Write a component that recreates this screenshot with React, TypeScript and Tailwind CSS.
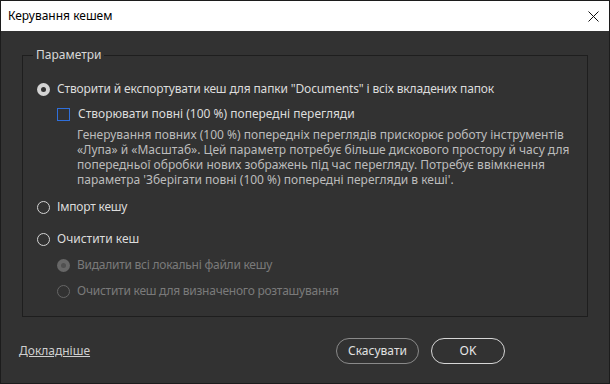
import React, { useState } from 'react';

type RadioProps = {
  checked: boolean;
  disabled?: boolean;
  onClick?: () => void;
};

const Radio: React.FC<RadioProps> = ({ checked, disabled, onClick }) => {
  if (checked) {
    return (
      <span
        onClick={onClick}
        className={`flex h-[13px] w-[13px] shrink-0 items-center justify-center rounded-full ${disabled ? 'bg-[#676767]' : 'bg-[#d4d4d4]'}`}
      >
        <span className={`h-[5px] w-[5px] rounded-full ${disabled ? 'bg-[#505050]' : 'bg-[#323232]'}`} />
      </span>
    );
  }
  return (
    <span
      onClick={onClick}
      className={`h-[13px] w-[13px] shrink-0 rounded-full border-[1.5px] ${disabled ? 'border-[#666666]' : 'border-[#d4d4d4]'}`}
    />
  );
};

export default function App() {
  const [mode, setMode] = useState<'export' | 'import' | 'clear'>('export');
  const [full, setFull] = useState(false);
  const [clearMode, setClearMode] = useState<'all' | 'location'>('all');
  const subDisabled = mode !== 'clear';

  return (
    <div
      className="flex h-[384px] w-[610px] flex-col border border-[#1c1c1c] text-[12px] leading-[16px]"
      style={{ fontFamily: '"Noto Sans", "Liberation Sans", sans-serif' }}
    >
      {/* title bar */}
      <div className="flex h-[30px] shrink-0 items-center justify-between bg-white pl-[7px] pr-[10px]">
        <span className="text-[12px] text-black">Керування кешем</span>
        <svg width="11" height="11" viewBox="0 0 11 11">
          <path d="M0.5 0.5 L10.5 10.5 M10.5 0.5 L0.5 10.5" stroke="#111" strokeWidth="1" />
        </svg>
      </div>

      <div className="flex flex-1 flex-col bg-[#323232]">
        <fieldset className="mx-[21px] mt-[16px] h-[270px] border border-[#1e1e1e] pl-[14px]">
          <legend className="ml-[-4px] px-[3px] text-[#d8d8d8]">Параметри</legend>

          <div
            className="mt-[18px] flex h-[16px] items-center gap-[7px] tracking-[-0.15px] text-[#dcdcdc]"
            onClick={() => setMode('export')}
          >
            <Radio checked={mode === 'export'} />
            <span>Створити й експортувати кеш для папки "Documents" і всіх вкладених папок</span>
          </div>

          <div className="mt-[9px] flex h-[16px] items-center gap-[8px] pl-[20px] text-[#dcdcdc]" onClick={() => setFull(!full)}>
            <span className={`h-[13px] w-[13px] shrink-0 border border-[#2f6fdb] ${full ? 'bg-[#2f6fdb]' : ''}`} />
            <span>Створювати повні (100 %) попередні перегляди</span>
          </div>

          <div className="mt-[5px] whitespace-nowrap pl-[40px] leading-[15px] text-[#bcbcbc]">
            <div>Генерування повних (100 %) попередніх переглядів прискорює роботу інструментів</div>
            <div>«Лупа» й «Масштаб». Цей параметр потребує більше дискового простору й часу для</div>
            <div>попередньої обробки нових зображень під час перегляду. Потребує ввімкнення</div>
            <div>параметра 'Зберігати повні (100 %) попередні перегляди в кеші'.</div>
          </div>

          <div
            className="mt-[12px] flex h-[16px] items-center gap-[7px] tracking-[-0.2px] text-[#dcdcdc]"
            onClick={() => setMode('import')}
          >
            <Radio checked={mode === 'import'} />
            <span>Імпорт кешу</span>
          </div>

          <div
            className="mt-[16px] flex h-[16px] items-center gap-[7px] text-[#dcdcdc]"
            onClick={() => setMode('clear')}
          >
            <Radio checked={mode === 'clear'} />
            <span>Очистити кеш</span>
          </div>

          <div
            className={`mt-[10px] flex h-[16px] items-center gap-[7px] pl-[20px] tracking-[-0.25px] ${subDisabled ? 'text-[#7a7a7a]' : 'text-[#dcdcdc]'}`}
          >
            <Radio checked={clearMode === 'all'} disabled={subDisabled} onClick={() => setClearMode('all')} />
            <span>Видалити всі локальні файли кешу</span>
          </div>

          <div
            className={`mt-[10px] flex h-[16px] items-center gap-[7px] pl-[20px] tracking-[-0.25px] ${subDisabled ? 'text-[#7a7a7a]' : 'text-[#dcdcdc]'}`}
          >
            <Radio checked={clearMode === 'location'} disabled={subDisabled} onClick={() => setClearMode('location')} />
            <span>Очистити кеш для визначеного розташування</span>
          </div>
        </fieldset>

        <div className="mt-[21px] flex h-[26px] items-center pl-[18px] pr-[104px]">
          <a className="text-[#cfcfcf] underline" href="#">
            Докладніше
          </a>
          <div className="ml-auto flex gap-[12px]">
            <button className="h-[26px] w-[83px] rounded-full border-[1.5px] border-[#8a8a8a] text-[#e0e0e0]">
              Скасувати
            </button>
            <button className="h-[26px] w-[74px] rounded-full border-[1.5px] border-[#d6d6d6] text-[#e8e8e8]">
              OK
            </button>
          </div>
        </div>
      </div>
    </div>
  );
}
